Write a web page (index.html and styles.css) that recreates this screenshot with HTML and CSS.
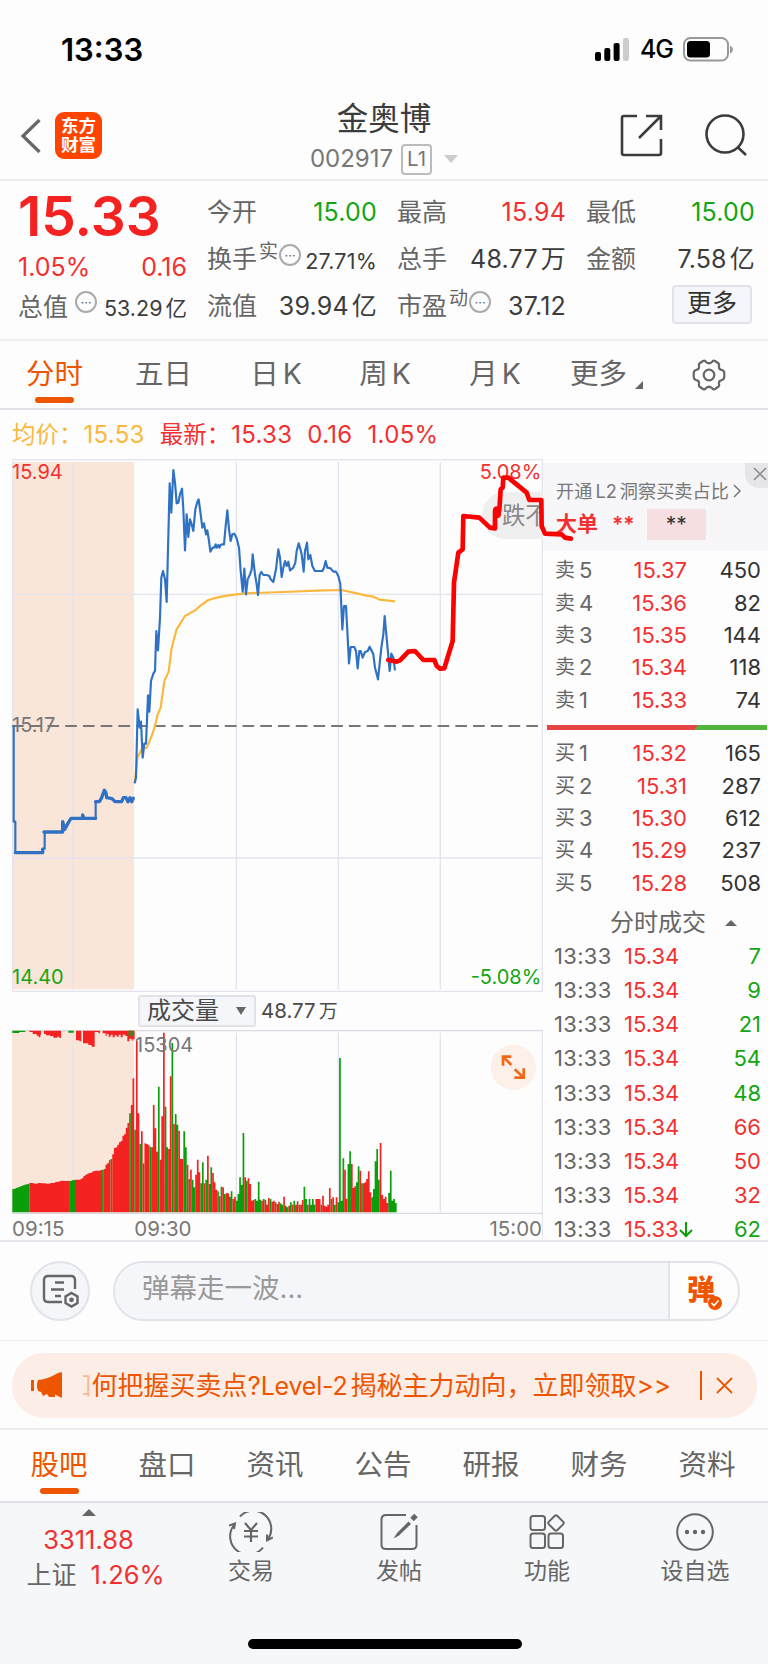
FILE: index.html
```html
<!DOCTYPE html>
<html lang="zh-CN">
<head>
  <meta charset="UTF-8">
  <meta name="viewport" content="width=device-width, initial-scale=1.0">
  <title>金奥博 002917</title>
  <link rel="stylesheet" href="styles.css">
</head>
<body>

  <!-- 状态栏 -->
  <div class="status-bar">
    <span class="clock">13:33</span>
    <div class="status-icons">
      <svg width="34" height="23" viewBox="0 0 34 23">
        <rect x="0" y="14" width="6" height="9" rx="2"/>
        <rect x="9.3" y="10" width="6" height="13" rx="2"/>
        <rect x="18.6" y="5" width="6" height="18" rx="2"/>
        <rect x="28" y="0" width="6" height="23" rx="2" fill="#ccc"/>
      </svg>
      <span class="net">4G</span>
      <svg width="51" height="25" viewBox="0 0 51 25">
        <rect x="1" y="1" width="44" height="22.5" rx="6.5" fill="none" stroke="#999" stroke-width="2"/>
        <rect x="4" y="4" width="23" height="16.5" rx="3.5"/>
        <path d="M47 8.500Q50 10 50 12.500Q50 15 47 16.500Z" fill="#999"/>
      </svg>
    </div>
  </div>

  <!-- 标题栏 -->
  <header class="header">
    <div class="header-left">
      <svg width="22" height="36" viewBox="0 0 22 36" fill="none" stroke="#666" stroke-width="3.2"><path d="M19.500 2L3 18L19.500 34"/></svg>
      <div class="logo">东方<br>财富</div>
    </div>
    <div class="header-title">
      <h1>金奥博</h1>
      <div class="code">002917<span class="level">L1</span><i class="tri-down"></i></div>
    </div>
    <div class="header-right">
      <svg width="43" height="43" viewBox="0 0 43 43" fill="none" stroke="#3c3c3c" stroke-width="2.600">
        <path d="M17 2H4Q2 2 2 4V39Q2 41 4 41H39Q41 41 41 39V25M26 2H41V16M41 2L19 24"/>
      </svg>
      <svg width="43" height="43" viewBox="0 0 43 43" fill="none" stroke="#3c3c3c" stroke-width="2.600">
        <circle cx="20" cy="20" r="18.500"/><path d="M32.500 33L41 41"/>
      </svg>
    </div>
  </header>

  <!-- 行情 -->
  <section class="quote">
    <div class="quote-price">
      <strong>15.33</strong>
      <div class="cell red"><span>1.05%</span><span>0.16</span></div>
      <div class="cell"><label>总值<i class="dots">···</i></label><b class="small">53.29<em>亿</em></b></div>
    </div>
    <div class="quote-grid">
      <div class="cell"><label>今开</label><b class="green">15.00</b></div>
      <div class="cell"><label>最高</label><b class="red">15.94</b></div>
      <div class="cell"><label>最低</label><b class="green">15.00</b></div>
      <div class="cell"><label>换手<sup>实</sup><i class="dots tight">···</i></label><b class="small">27.71%</b></div>
      <div class="cell"><label>总手</label><b>48.77<em>万</em></b></div>
      <div class="cell"><label>金额</label><b>7.58<em>亿</em></b></div>
      <div class="cell"><label>流值</label><b>39.94<em>亿</em></b></div>
      <div class="cell"><label>市盈<sup>动</sup><i class="dots tight">···</i></label><b>37.12</b></div>
      <div class="cell cell-more"><button class="more-btn">更多</button></div>
    </div>
  </section>

  <!-- 周期切换 -->
  <nav class="tabs period-tabs">
    <a class="active">分时</a>
    <a>五日</a>
    <a>日<b>K</b></a>
    <a>周<b>K</b></a>
    <a>月<b>K</b></a>
    <a>更多<i class="corner"></i></a>
    <a><svg width="34" height="32" viewBox="0 0 34 32" fill="none" stroke="#666" stroke-width="2.200" stroke-linejoin="round">
      <path d="M11 2Q13 1 14 3Q17 5.500 20 3Q21 1 23 2L26 4Q27.500 5 27 7Q26.500 10.500 30 11Q32 11.500 32.300 14V18Q32 20.500 30 21Q26.500 21.500 27 25Q27.500 27 26 28L23 30Q21 31 20 29Q17 26.500 14 29Q13 31 11 30L8 28Q6.500 27 7 25Q7.500 21.500 4 21Q2 20.500 1.700 18V14Q2 11.500 4 11Q7.500 10.500 7 7Q6.500 5 8 4Z"/>
      <circle cx="17" cy="16" r="5.300"/></svg></a>
  </nav>

  <div class="avg-line">
    <span class="yellow">均价：<b>15.53</b></span>
    <span class="red">最新：<b>15.33</b><b>0.16</b><b>1.05%</b></span>
  </div>

  <!-- 分时图 + 盘口 -->
  <section class="market">
    <div class="charts">
      <svg class="price-chart" viewBox="36 24 1593 1599">
        <rect x="36" y="33" width="366" height="1582" fill="#fae5d9"/>
        <g stroke="#e3e4ee" stroke-width="4" fill="none">
          <path d="M36 26H1629M37 26V1621H1629M1627 26V1621"/>
          <path d="M219 33V1615M709 33V1615M1015 33V1615M1321 33V1615M36 430H1629M36 1221H1629"/>
        </g>
        <g class="bullet">
          <rect x="1446" y="123" width="260" height="141" rx="70" fill="#efefef"/>
          <text x="1506" y="219" font-size="70" fill="#888">跌不</text>
        </g>
        <text x="36" y="83" class="axis red">15.94</text>
        <text x="1624" y="83" class="axis red" text-anchor="end">5.08%</text>
        <text x="36" y="843" class="axis">15.17</text>
        <text x="36" y="1600" class="axis green">14.40</text>
        <text x="1624" y="1600" class="axis green" text-anchor="end">-5.08%</text>
        <path d="M36 825H1620" stroke="#777" stroke-width="6" stroke-dasharray="35 18.200"/>
        <polyline class="avg" points="404,997 412,920 425,895 440,890 455,855 465,825 473,790 482,770 493,690 506,662 515,590 530,535 555,495 585,478 600,465 625,447 650,440 685,433 735,427 850,423 950,419 1025,417 1060,425 1100,434 1120,437 1140,446 1185,451"/>
        <path class="price" d="M41 824V1112H46V1205H128V1193H134V1143H188"/>
        <path class="price pre" d="M46 1205H128V1195M132 1143H188V1112L194 1135L205 1115L213 1102H248V1092L252 1102H287M287 1052H298L304 1042L313 1018L318 1025L320 1040L336 1043L345 1052H365L370 1040H378L384 1052L390 1040L395 1052L400 1042"/>
        <path class="price" d="M287 1102V1052"/>
        <polyline class="price" points="404,997 408,980 413,775 419,830 423,812 428,920 433,878 438,878 444,733 448,782 453,690 460,668 465,660 469,540 474,598 480,500 484,380 489,360 495,385 500,453 509,97 514,185 520,57 525,95 530,157 535,155 540,130 546,113 550,175 555,298 560,190 565,258 570,205 575,220 580,240 586,175 592,152 596,145 602,190 607,230 612,217 618,250 622,238 627,270 631,302 638,290 643,290 647,280 650,290 655,282 658,290 662,282 667,280 672,280 677,225 682,178 687,235 692,270 697,250 703,248 710,262 717,290 722,360 728,422 733,353 738,430 743,385 750,370 755,355 758,310 765,370 770,400 774,432 779,372 784,363 790,372 800,372 808,375 812,385 820,393 828,355 835,295 840,320 845,378 850,350 855,330 860,345 865,332 870,358 880,350 886,335 890,300 896,277 900,290 905,310 911,362 915,300 921,275 925,325 931,312 937,345 945,360 967,360 972,350 977,330 982,350 992,352 1000,362 1008,362 1015,375 1021,400 1027,535 1032,465 1038,465 1042,540 1047,637 1052,588 1063,588 1068,600 1073,652 1078,600 1082,600 1088,620 1095,603 1103,600 1109,587 1120,610 1125,650 1134,685 1144,590 1150,550 1154,495 1158,540 1164,605 1169,660 1174,608 1180,620 1185,658"/>
      </svg>

      <div class="volume-head">
        <button>成交量<i></i></button>
        <span>48.77<em>万</em></span>
      </div>

      <svg class="volume-chart" viewBox="36 148 1593 552">
        <rect x="36" y="150" width="366" height="545" fill="#fae5d9"/>
        <g stroke="#e3e4ee" stroke-width="4" fill="none">
          <path d="M219 156V695M709 156V695M1015 156V695M1321 156V695M1627 148V700"/>
          <path d="M36 150H1629M36 698H1629" stroke="#d8d9e2"/>
        </g>
        <path fill="#0a9f0a" d="M37 150H76V154H58V157H37ZM205 150H221V156H205Z"/>
        <path fill="#f52222" d="M88 150H123V162H121V170H116V165H110V160H98V154H88ZM132 150H183V172H178V168H172V171H160V166H150V164H138V160H132ZM228 150H244V182H238V179H228ZM249 150H284V198H275V193H265V188H249ZM284 150H300V158H295V154H284ZM308 150H404V176H398V180H395V174H388V182H382V166H376V162H368V170H362V162H356V168H350V164H344V170H338V162H332V168H326V160H320V166H317V158H308Z"/>
        <path fill="#5f7517" d="M385 150H400V166H385Z"/>
        <path id="vol-down" fill="#0a9f0a"/>
        <path id="vol-up" fill="#f52222"/>
        <text x="405" y="213" class="axis">15304</text>
        <g class="expand">
          <circle cx="1540" cy="260" r="68" fill="#fdf0e9"/>
          <path d="M1509 255V228H1534M1511 230L1534 253M1544 266L1570 290M1571 263V291H1543" fill="none" stroke="#f06a1a" stroke-width="8"/>
        </g>
      </svg>

      <div class="times"><span>09:15</span><span class="t-open">09:30</span><span class="t-close">15:00</span></div>
    </div>

    <aside class="book">
      <div class="l2">
        <i class="l2-close"><svg width="14" height="14" viewBox="0 0 14 14" stroke="#888" stroke-width="1.500"><path d="M1 1L13 13M13 1L1 13"/></svg></i>
        <div class="l2-link">开通<b>L2</b>洞察买卖占比<svg width="8" height="14" viewBox="0 0 8 14" fill="none" stroke="#777" stroke-width="1.500"><path d="M1 1L7 7L1 13"/></svg></div>
        <div class="l2-row"><strong>大单</strong><span class="stars">**</span><span class="stars-box">**</span></div>
      </div>
      <div class="levels">
        <div><label>卖<b>5</b></label><span>15.37</span><em>450</em></div>
        <div><label>卖<b>4</b></label><span>15.36</span><em>82</em></div>
        <div><label>卖<b>3</b></label><span>15.35</span><em>144</em></div>
        <div><label>卖<b>2</b></label><span>15.34</span><em>118</em></div>
        <div><label>卖<b>1</b></label><span>15.33</span><em>74</em></div>
      </div>
      <div class="ratio"></div>
      <div class="levels">
        <div><label>买<b>1</b></label><span>15.32</span><em>165</em></div>
        <div><label>买<b>2</b></label><span>15.31</span><em>287</em></div>
        <div><label>买<b>3</b></label><span>15.30</span><em>612</em></div>
        <div><label>买<b>4</b></label><span>15.29</span><em>237</em></div>
        <div><label>买<b>5</b></label><span>15.28</span><em>508</em></div>
      </div>
      <div class="deals-title">分时成交<i class="tri-up"></i></div>
      <div class="deals">
        <div><label>13:33</label><span>15.34</span><em class="green">7</em></div>
        <div><label>13:33</label><span>15.34</span><em class="green">9</em></div>
        <div><label>13:33</label><span>15.34</span><em class="green">21</em></div>
        <div><label>13:33</label><span>15.34</span><em class="green">54</em></div>
        <div><label>13:33</label><span>15.34</span><em class="green">48</em></div>
        <div><label>13:33</label><span>15.34</span><em class="red">66</em></div>
        <div><label>13:33</label><span>15.34</span><em class="red">50</em></div>
        <div><label>13:33</label><span>15.34</span><em class="red">32</em></div>
        <div><label>13:33</label><span>15.33<svg width="14" height="17" viewBox="0 0 14 17" fill="none" stroke="#0a9f0a" stroke-width="2"><path d="M7 1V15M1 9L7 15L13 9"/></svg></span><em class="green">62</em></div>
      </div>
    </aside>

    <!-- 手绘走势 -->
    <svg class="doodle" viewBox="1140 24 600 700">
      <polyline points="1165,627 1190,632 1200,628 1225,602 1245,600 1270,627 1303,627 1310,645 1320,653 1333,652 1358,570 1362,395 1375,305 1388,295 1390,195 1438,200 1470,230 1485,232 1485,180 1498,178 1502,115 1508,110 1510,80 1525,80 1580,125 1588,147 1624,147 1625,225 1635,248 1685,250 1695,260 1713,263"/>
      <path d="M1491 178V190" stroke-width="24"/>
    </svg>
  </section>

  <!-- 弹幕输入 -->
  <section class="danmu">
    <div class="danmu-set">
      <svg width="37" height="34" viewBox="0 0 37 34" fill="none" stroke="#666" stroke-width="2.400">
        <path d="M33 15V6Q33 2 29 2H6Q2 2 2 6V24Q2 28 6 28H20M13 8.500H22M9 15.500H22M13 22H19"/>
        <path d="M29.500 19L35.500 22.500V29L29.500 32.500L23.500 29V22.500Z"/><circle cx="29.500" cy="25.800" r="1.200"/>
      </svg>
    </div>
    <div class="danmu-box">
      <div class="danmu-input">弹幕走一波...</div>
      <div class="danmu-send">弹<svg width="14" height="14" viewBox="0 0 14 14"><circle cx="7" cy="7" r="7" fill="#ee5500"/><path d="M3.500 7L6 9.500L10.500 4.500" fill="none" stroke="#fff" stroke-width="1.600"/></svg></div>
    </div>
  </section>

  <!-- 公告条 -->
  <section class="notice-wrap">
    <div class="notice">
      <svg width="32" height="27" viewBox="0 0 32 27" fill="#ee5500"><rect x="0" y="8" width="3" height="11"/><path d="M7 8Q15 8 27 1L31 0V26L27 24L24 22.500V25H18L16 22L12 24L10 20L7 19Q5 13.500 7 8Z"/></svg>
      <div class="notice-text"><span class="fade">如</span>何把握买卖点?<b>Level-2</b>揭秘主力动向，立即领取&gt;&gt;</div>
      <i class="bar"></i>
      <svg width="17" height="17" viewBox="0 0 17 17" stroke="#ee5500" stroke-width="1.800"><path d="M1 1L16 16M16 1L1 16"/></svg>
    </div>
  </section>

  <nav class="tabs info-tabs">
    <a class="active">股吧</a>
    <a>盘口</a>
    <a>资讯</a>
    <a>公告</a>
    <a>研报</a>
    <a>财务</a>
    <a>资料</a>
  </nav>

  <!-- 底部 -->
  <footer class="bottom">
    <div class="bottom-nav">
      <div class="index">
        <i class="tri-up"></i>
        <b class="red">3311.88</b>
        <div class="index-name">上证<b class="red">1.26%</b></div>
      </div>
      <a>
        <svg width="44" height="40" viewBox="0 0 44 40" fill="none" stroke="#666" stroke-width="2">
          <path d="M11 4.500A18 18 0 0 1 39 27M44 25.500L38 28.500V22.500M34 35.500A18 18 0 0 1 5 13M0 13.500L6 11.500L5 17"/>
          <path d="M16 11L22 18L28 11M22 18V30M15 19H29M15 24.500H29" stroke-width="2.200"/>
        </svg>交易</a>
      <a>
        <svg width="40" height="40" viewBox="0 0 40 40" fill="none" stroke="#666" stroke-width="2">
          <path d="M27 3H7Q2.500 3 2.500 7.500V33Q2.500 37 7 37H33Q37.500 37 37.500 33V13"/>
          <path d="M14.500 26.500L18 21L29.500 9.500L32 12L20 23.500Z" fill="#666" stroke="none"/><path d="M33 7.500L37 3.500" stroke-width="5"/>
        </svg>发帖</a>
      <a>
        <svg width="36" height="40" viewBox="0 0 36 40" fill="none" stroke="#666" stroke-width="2">
          <rect x="1.500" y="4" width="14.500" height="14" rx="2.500"/><rect x="1.500" y="21.500" width="14.500" height="14.500" rx="2.500"/><rect x="19.500" y="21.500" width="14.500" height="14.500" rx="2.500"/>
          <rect x="21" y="5" width="12" height="12" rx="2" transform="rotate(45 27 11)"/>
        </svg>功能</a>
      <a>
        <svg width="40" height="40" viewBox="0 0 40 40" fill="none" stroke="#666" stroke-width="2">
          <circle cx="20" cy="20" r="17.800"/><g fill="#666" stroke="none"><circle cx="12" cy="20" r="2.200"/><circle cx="20" cy="20" r="2.200"/><circle cx="28" cy="20" r="2.200"/></g>
        </svg>设自选</a>
    </div>
    <div class="home-bar"></div>
  </footer>

  <script src="script.js"></script>
</body>
</html>
```

FILE: styles.css
```css
/* ========== 全体 ========== */
* {
  box-sizing: border-box;
}
body {
  margin: 0;
  width: 768px;
  background: #fdfdfd;
  color: #666;
  font-family: Inter, "Noto Sans CJK SC", sans-serif;
  font-size: 25px;
  line-height: 1;
}
svg {
  display: block;
  flex-shrink: 0;
}
b, em, i {
  font-weight: normal;
  font-style: normal;
}
.red { color: #f23030; }
.green { color: #14a514; }
.yellow { color: #fbb83c; }
.tri-down {
  border: 7px solid transparent;
  border-top: 8px solid #ccc;
  border-bottom: none;
}
.tri-up {
  border: 7px solid transparent;
  border-bottom: 7px solid #666;
  border-top: none;
}

/* ========== 状态栏 ========== */
.status-bar {
  display: flex;
  justify-content: space-between;
  height: 98px;
  padding: 0 34px 0 61px;
  align-items: center;
  color: #000;
}
.clock {
  font-size: 31px;
  font-weight: 600;
}
.status-icons {
  display: flex;
  align-items: center;
}
.net {
  font-size: 25px;
  font-weight: 500;
  letter-spacing: -1px;
  margin: 0 10px 0 11px;
}

/* ========== 标题栏 ========== */
.header {
  display: grid;
  grid-template-columns: 200px 1fr 200px;
  height: 83px;
  border-bottom: 2px solid #ececf0;
}
.header-left {
  display: flex;
  align-items: center;
  height: 75px;
  gap: 13px;
  padding-left: 20px;
}
.logo {
  width: 47px;
  height: 47px;
  padding-top: 4px;
  border-radius: 9px;
  background: #ff4400;
  color: #fff;
  font-size: 17.500px;
  font-weight: 700;
  line-height: 19px;
  text-align: center;
}
.header-title {
  text-align: center;
}
.header-title h1 {
  margin: 5px 0 9px;
  font-size: 31.500px;
  line-height: 32px;
  font-weight: 400;
  color: #3c3c3c;
}
.code {
  display: flex;
  justify-content: center;
  align-items: center;
  gap: 8px;
  font-size: 24px;
  color: #777;
}
.level {
  padding: 3px 4px;
  border: 2px solid #bbb;
  border-radius: 4px;
  font-size: 20.500px;
}
.code .tri-down {
  margin-left: 4px;
}
.header-right {
  display: flex;
  align-items: center;
  justify-content: flex-end;
  height: 75px;
  gap: 42px;
  padding-right: 20px;
}

/* ========== 行情 ========== */
.quote {
  display: flex;
  gap: 20px;
  height: 160px;
  padding: 8px 13px 0 18px;
  border-bottom: 2px solid #efeff2;
}
.quote-price {
  width: 170px;
}
.quote-price strong {
  display: block;
  height: 55px;
  line-height: 55px;
  font-size: 55px;
  font-weight: 600;
  letter-spacing: 0;
  color: #f52222;
}
.quote-price .cell {
  height: 46px;
}
.quote-price .cell + .cell {
  height: 34px;
}
.quote-grid {
  flex: 1;
  display: grid;
  grid-template-columns: 170px 169px 169px;
  grid-template-rows: 47px 47px 47px;
  column-gap: 20px;
}
.cell {
  display: flex;
  justify-content: space-between;
  align-items: center;
  white-space: nowrap;
}
.quote-grid .cell b {
  color: #3c3c3c;
  font-size: 25px;
  letter-spacing: 0.200px;
}
.quote-grid .cell b.green { color: #14a514; }
.quote-grid .cell b.red { color: #f23030; }
.cell b.small,
.quote-grid .cell b.small {
  font-size: 21.500px;
  color: #3c3c3c;
  padding-top: 4px;
}
.cell em {
  margin-left: 3px;
}
.cell label {
  display: flex;
  align-items: center;
}
.cell sup {
  font-size: 19px;
  margin: -16px 0 0 2px;
}
.dots {
  width: 22px;
  height: 22px;
  margin: -10px 0 0 7px;
  border: 2px solid #aaa;
  border-radius: 50%;
  font-size: 13px;
  line-height: 18px;
  text-align: center;
}
.dots.tight {
  margin-left: 1px;
}
.quote-grid .cell-more {
  justify-content: flex-end;
  padding-right: 3px;
}
.more-btn {
  width: 80px;
  height: 39px;
  margin-top: -4px;
  padding: 0 0 2px;
  border: 2px solid #e2e3ea;
  border-radius: 4px;
  background: #f5f6fa;
  color: #333;
  font: inherit;
}

/* ========== 标签 ========== */
.tabs {
  display: grid;
}
.tabs a {
  position: relative;
  display: flex;
  justify-content: center;
  align-items: center;
  font-size: 28.500px;
}
.tabs a b {
  margin-left: 4px;
}
.tabs a.active {
  color: #ee5500;
}
.tabs a.active::after {
  content: "";
  position: absolute;
  bottom: 5px;
  left: calc(50% - 19.500px);
  width: 39px;
  height: 6px;
  border-radius: 3px;
  background: #ee5500;
}
.period-tabs {
  grid-template-columns: 109px 109px 116px 102px 118px 95px 119px;
  height: 69px;
  border-bottom: 2px solid #e0e0e8;
}
.corner {
  margin: 20px -10px 0 8px;
  border: 4px solid transparent;
  border-right-color: #666;
  border-bottom-color: #666;
}
.avg-line {
  display: flex;
  gap: 15px;
  height: 49px;
  padding: 1px 12px 0;
  align-items: center;
  font-size: 23.500px;
}
.avg-line b {
  font-size: 24px;
  letter-spacing: 0.300px;
}
.avg-line b:first-child {
  margin-left: 1px;
}
.avg-line b + b {
  margin-left: 15px;
}

/* ========== 分时图 ========== */
.market {
  position: relative;
  display: flex;
  height: 783px;
  padding-left: 12px;
  border-bottom: 2px solid #e6e6ec;
}
.charts {
  width: 531px;
}
.price-chart {
  width: 531px;
  height: 533px;
}
.price-chart text,
.volume-chart text {
  font-family: Inter, "Noto Sans CJK SC", sans-serif;
}
.axis {
  font-size: 60px;
  fill: #777;
}
.axis.red { fill: #f23030; }
.axis.green { fill: #14a514; }
.price,
.avg {
  fill: none;
  stroke: #2f72c4;
  stroke-width: 6.500px;
  stroke-linejoin: round;
}
.price.pre {
  stroke-width: 10px;
  stroke-linecap: round;
}
.avg {
  stroke: #fbb83c;
}
.volume-head {
  display: flex;
  align-items: center;
  height: 38px;
  padding-left: 126px;
  gap: 5px;
  font-size: 20.500px;
  color: #4a4a4a;
}
.volume-head button {
  display: flex;
  align-items: center;
  gap: 17px;
  width: 118px;
  height: 32px;
  padding: 0 0 0 7px;
  border: 2px solid #e2e3ea;
  border-radius: 3px;
  background: #f5f6fa;
  color: #4a4a4a;
  font: inherit;
  font-size: 24px;
  line-height: 1;
}
.volume-head button i {
  border: 5px solid transparent;
  border-top: 8px solid #666;
  border-bottom: none;
}
.volume-head em {
  font-size: 19px;
  margin-left: 3px;
}
.volume-chart {
  width: 531px;
  height: 184px;
}
.times {
  display: flex;
  height: 27px;
  align-items: center;
  padding-top: 4px;
  font-size: 20.500px;
  color: #777;
  border-right: 1px solid #e3e4ee;
}
.t-open { margin-left: 70px; }
.t-close { margin-left: auto; }
.doodle {
  position: absolute;
  left: 380px;
  top: 0;
  width: 200px;
  height: 233.300px;
  fill: none;
  stroke: #fa0202;
  stroke-width: 14px;
  stroke-linecap: round;
  stroke-linejoin: round;
}

/* ========== 盘口 ========== */
.book {
  width: 225px;
  padding-top: 4px;
}
.l2 {
  position: relative;
  height: 88px;
  padding: 19px 0 0 13px;
  background: #f7f7fa;
}
.l2-close {
  position: absolute;
  top: 0;
  right: 0;
  display: flex;
  width: 23px;
  height: 25px;
  padding: 4px 0 0 8px;
  border-bottom-left-radius: 14px;
  background: #e6e6ea;
}
.l2-link {
  display: flex;
  align-items: center;
  font-size: 18.200px;
  color: #777;
}
.l2-link b {
  margin: 0 3px;
}
.l2-link svg {
  margin-left: 4px;
}
.l2-row {
  display: flex;
  align-items: center;
  height: 31px;
  margin-top: 9px;
  font-size: 21px;
  color: #f23030;
}
.l2-row strong {
  margin-top: -2px;
  font-weight: 700;
}
.stars {
  margin-left: 14px;
  font-weight: 600;
}
.stars-box {
  width: 59px;
  height: 31px;
  margin-left: 12px;
  padding-top: 5px;
  background: #f6dfe1;
  color: #333;
  text-align: center;
}
.levels {
  padding: 3px 7px 0 12px;
}
.levels div {
  display: flex;
  align-items: center;
  height: 32.400px;
  font-size: 22px;
}
.levels label {
  display: flex;
  align-items: center;
  width: 56px;
  font-size: 20px;
}
.levels label b {
  margin-left: 4px;
  font-size: 22px;
}
.levels span {
  width: 76px;
  text-align: right;
  color: #f23030;
}
.levels em {
  flex: 1;
  text-align: right;
  color: #333;
}
.ratio {
  height: 5px;
  margin: 9px 1px 4px 4px;
  background: linear-gradient(120deg, #e64545 67.500%, #52b43c 67.500%);
}
.deals-title {
  display: flex;
  align-items: center;
  height: 36px;
  padding: 2px 0 0 67px;
  margin-top: 5px;
  gap: 19px;
  font-size: 24px;
}
.deals-title .tri-up {
  border-width: 0 6px 6px;
}
.deals {
  margin-top: -1px;
  padding: 0 7px 0 11px;
}
.deals div {
  display: flex;
  align-items: center;
  height: 34.150px;
  font-size: 22px;
}
.deals label {
  width: 70px;
  letter-spacing: 0.300px;
}
.deals span {
  display: flex;
  align-items: center;
  color: #f23030;
}
.deals em {
  flex: 1;
  text-align: right;
}

/* ========== 弹幕 ========== */
.danmu {
  display: flex;
  align-items: center;
  gap: 23px;
  height: 99px;
  padding: 0 28px 0 30px;
  border-bottom: 1px solid #eeeef1;
}
.danmu-set {
  display: flex;
  justify-content: center;
  align-items: center;
  width: 60px;
  height: 60px;
  border: 2px solid #e2e3ea;
  border-radius: 50%;
  background: #f5f6fa;
}
.danmu-box {
  flex: 1;
  display: flex;
  height: 60px;
  border: 2px solid #e2e3ea;
  border-radius: 30px;
  overflow: hidden;
}
.danmu-input {
  flex: 1;
  padding: 12px 0 0 27px;
  background: #f5f6fa;
  color: #999;
  font-size: 27.500px;
}
.danmu-send {
  position: relative;
  width: 70px;
  padding: 13px 0 0 17px;
  border-left: 2px solid #e2e3ea;
  color: #ee5500;
  font-size: 28px;
  font-weight: 900;
}
.danmu-send svg {
  position: absolute;
  left: 38px;
  top: 33px;
}

/* ========== 公告条 ========== */
.notice-wrap {
  height: 89px;
  padding: 12px 11px 0 12px;
  border-bottom: 2px solid #ececf0;
}
.notice {
  display: flex;
  align-items: center;
  height: 65px;
  padding: 0 24px 0 19px;
  border-radius: 32px;
  background: #fceee6;
  color: #ee5500;
  font-size: 26px;
}
.notice-text {
  display: flex;
  justify-content: flex-end;
  width: 588px;
  margin-left: 20px;
  overflow: hidden;
  white-space: nowrap;
  line-height: 36px;
}
.notice-text b {
  margin-right: 3px;
  font-size: 25px;
  letter-spacing: -0.200px;
}
.fade {
  opacity: 0.35;
}
.bar {
  width: 2px;
  height: 29px;
  margin: 0 14px 0 auto;
  background: #ee5500;
}

/* ========== 资讯标签 ========== */
.info-tabs {
  grid-template-columns: repeat(7, 108px);
  height: 71px;
  padding: 0 5px;
}
.info-tabs a {
  font-size: 28.500px;
}
.info-tabs a.active::after {
  bottom: 7px;
}

/* ========== 底部 ========== */
.bottom {
  height: 164px;
  border-top: 2px solid #dfe1e8;
  background: #f6f7f9;
}
.bottom-nav {
  display: grid;
  grid-template-columns: 177px repeat(4, 148px);
  height: 136px;
}
.bottom-nav a {
  display: flex;
  flex-direction: column;
  align-items: center;
  gap: 8px;
  padding-top: 9px;
  font-size: 23px;
}
.index {
  display: flex;
  flex-direction: column;
  align-items: center;
  padding-top: 6px;
}
.index > b {
  margin: 11px 0 9px;
  font-size: 25.500px;
}
.index-name {
  padding-left: 14px;
}
.index-name b {
  margin-left: 14px;
  font-size: 25.500px;
}
.home-bar {
  width: 274px;
  height: 10px;
  margin-left: 248px;
  border-radius: 5px;
  background: #000;
}
```

FILE: script.js
```js
// 每分钟成交量：高度 + 颜色（r 涨 / g 跌），09:15 - 13:33
const volume = `70g 71g 73g 75g 77g 79g 81g 83g 84g 85g 88r 88r 87r 86r 86r 88r 88r 87r 87r 87r 86r 86r 87r
88r 88r 90r 92r 92r 94r 95r 94r 94r 94r 94r 94g 96g 97g 98r 98r 98r 99r 103r 109r 113r 115r 118r 119r 122r 124r 125r
125r 125r 127r 128g 130r 143r 147r 156r 160g 174r 193r 195r 203r 210r 214r 230r 234r 254r 268r 297g 322r 402r
248g 515r 297r 205g 243r 147g 207r 205r 202r 197g 195r 322r 252r 182r 377g 158r 288r 539r 317g 195g 190r 408r
508g 265r 295g 263g 245r 160r 160r 243g 195g 143r 100g 128r 98g 75g 113r 158r 120r 87g 150g 87r 98g 170r 85g
135g 118r 90r 68r 63g 48r 77g 75r 55g 57r 57r 47g 63g 40r 47r 35g 55g 105g 83g 238g 105r 95g 102r 85r 35r 37r
40g 35g 92g 38g 35r 40g 37r 23r 43r 40g 32r 35r 30g 25r 32r 27g 23g 47r 20g 15g 20r 30g 23r 35g 23r 33r 23g 23r
37r 77g 40g 23r 40g 23g 40g 23g 40r 40r 40r 23g 50r 20r 17r 23r 73r 40g 45r 23g 45r 30g 463g 35g 162g 128r 40r
145g 183g 145r 73r 78r 90g 138g 125r 87g 87r 90r 100r 123r 60r 45g 70g 153g 190g 98g 208r 52r 40r 47r 28r 58g
125g 35g 40g 28g`.split(/\s+/);

const base = 695;
const step = 1153 / volume.length;
const paths = { r: '', g: '' };

volume.forEach((v, i) => {
  const h = parseInt(v);
  const x = 37 + i * step;
  paths[v.slice(-1)] += `M${x.toFixed(1)} ${base}V${base - h}h${step.toFixed(1)}V${base}Z`;
});

document.getElementById('vol-up').setAttribute('d', paths.r);
document.getElementById('vol-down').setAttribute('d', paths.g);
```
